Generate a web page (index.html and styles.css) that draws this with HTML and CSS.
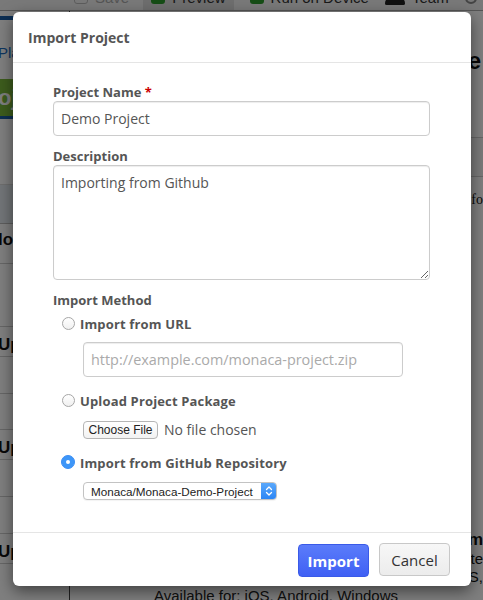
FILE: index.html
```html
<!DOCTYPE html>
<html>
<head>
<meta charset="utf-8">
<link rel="stylesheet" href="styles.css">
</head>
<body>
<div class="page">
  <div class="topbar">
    <span class="tb-item tb-save"><span class="tb-ico box"></span>Save</span>
    <span class="tb-item tb-active"><span class="tb-ico green"></span>Preview</span>
    <span class="tb-item"><span class="tb-ico green"></span>Run on Device</span>
    <span class="tb-item"><span class="tb-ico dark"></span>Team</span>
    <span class="tb-item"><span class="tb-ico gear"></span>Co</span>
  </div>
  <div class="page-main">
    <div class="side">
      <div class="side-tabline"></div>
      <div class="side-link">Pla</div>
      <div class="side-green">oj</div>
      <div class="side-grey"></div>
      <div class="side-row first">lo</div>
      <div class="side-row gap63"></div>
      <div class="side-row up">Up</div>
      <div class="side-row gap37"></div>
      <div class="side-row gap36"></div>
      <div class="side-row up">Up</div>
      <div class="side-row gap37"></div>
      <div class="side-row gap37"></div>
      <div class="side-row up">Up</div>
    </div>
    <div class="content">
      <div class="content-title">e</div>
      <div class="content-row"></div>
      <div class="content-text">fo</div>
      <div class="content-bottom">
        <div class="cb-title">m</div>
        <div class="cb-text">te</div>
        <div class="cb-text">S,</div>
        <div class="cb-avail">Available for: iOS, Android, Windows</div>
      </div>
    </div>
  </div>
</div>
<div class="overlay"></div>

<div class="modal">
  <div class="modal-header">Import Project</div>
  <div class="modal-body">
    <label class="field-label">Project Name <span class="req">*</span></label>
    <input class="text-input" type="text" value="Demo Project">
    <label class="field-label gap">Description</label>
    <textarea class="text-area">Importing from Github</textarea>
    <label class="field-label gap">Import Method</label>
    <div class="method">
      <label class="radio-row"><input type="radio" name="m"><span>Import from URL</span></label>
      <div class="sub">
        <input class="text-input url" type="text" placeholder="http://example.com/monaca-project.zip">
      </div>
      <label class="radio-row spaced"><input type="radio" name="m"><span>Upload Project Package</span></label>
      <div class="sub file-row">
        <button class="file-btn" type="button">Choose File</button>
        <span class="file-text">No file chosen</span>
      </div>
      <label class="radio-row spaced"><input type="radio" name="m" checked><span>Import from GitHub Repository</span></label>
      <div class="sub">
        <div class="select">
          <span class="select-text">Monaca/Monaca-Demo-Project</span>
          <span class="select-arrow">
            <svg width="8" height="12" viewBox="0 0 8 12"><path d="M1.5 4.5 L4 2 L6.5 4.5 M1.5 7.5 L4 10 L6.5 7.5" fill="none" stroke="#fff" stroke-width="1.3" stroke-linecap="round" stroke-linejoin="round"/></svg>
          </span>
        </div>
      </div>
    </div>
  </div>
  <div class="modal-footer">
    <button class="btn btn-primary" type="button">Import</button>
    <button class="btn btn-default" type="button">Cancel</button>
  </div>
</div>
</body>
</html>
```

FILE: styles.css
```css
* { box-sizing: border-box; }
html, body {
  margin: 0;
  padding: 0;
  width: 483px;
  height: 600px;
  overflow: hidden;
}
body {
  position: relative;
  font-family: "Open Sans", "DejaVu Sans", sans-serif;
  background: #fff;
}

/* background page */
.page {
  width: 483px;
  height: 600px;
  display: flex;
  flex-direction: column;
  background: #fff;
  overflow: hidden;
}
.topbar {
  margin-top: -15px;
  height: 26px;
  flex: none;
  display: flex;
  align-items: center;
  background: #f2f2f2;
  border-bottom: 1px solid #aaa;
  font-family: "Liberation Sans", sans-serif;
  font-size: 15px;
  color: #333;
  padding-left: 74px;
  gap: 16px;
  overflow: hidden;
}
.tb-item { display: flex; align-items: center; gap: 7px; height: 26px; white-space: nowrap; }
.tb-save { color: #aaa; }
.tb-active { background: #dcdcdc; padding: 0 8px; margin-left: -2px; }
.tb-ico { width: 14px; height: 13px; display: inline-block; border-radius: 3px; }
.tb-ico.box { border: 1px solid #bbb; }
.tb-ico.green { background: #2c9a2c; }
.tb-ico.dark { background: #222; border-radius: 8px 8px 2px 2px; height: 8px; margin-top: 6px; width: 20px; }
.tb-ico.gear { border: 2px solid #888; border-radius: 50%; width: 12px; height: 12px; }

.page-main { flex: 1; display: flex; min-height: 0; }
.side {
  width: 70px;
  flex: none;
  border-right: 1px solid #444;
  font-family: "Liberation Sans", sans-serif;
  font-size: 17px;
  color: #111;
  overflow: hidden;
}
.side-tabline { height: 4px; background: #1a5fa8; margin-top: 5px; }
.side-link { color: #1a6dc0; font-size: 15px; margin-top: 24px; height: 24px; text-indent: -2px; }
.side-green {
  background: #7ab83a; color: #fff; font-weight: bold; font-size: 22px;
  height: 40px; line-height: 38px; margin-top: 11px; border-bottom: 3px solid #1a5fa8;
  text-indent: -2px;
}
.side-grey { height: 40px; margin-top: 65px; background: #e5ebf0; border-bottom: 1px solid #bbb; border-top: 1px solid #ddd; }
.side-row { border-bottom: 1px solid #ccc; text-indent: -2px; font-weight: bold; }
.side-row.first { height: 40px; line-height: 32px; }
.side-row.gap63 { height: 63px; }
.side-row.gap37 { height: 37px; }
.side-row.gap36 { height: 36px; }
.side-row.up { height: 30px; line-height: 36px; }
.content {
  flex: 1;
  font-family: "Liberation Sans", sans-serif;
  color: #111;
  display: flex;
  flex-direction: column;
  overflow: hidden;
}
.content-title { font-size: 24px; font-weight: bold; text-align: right; margin-top: 36px; padding-right: 2px; height: 44px; }
.content-row { height: 40px; margin-top: 46px; border-bottom: 1px solid #ccc; border-top: 1px solid #ccc; background: #f5f5f5; }
.content-text { font-family: "Liberation Serif", serif; font-size: 14px; text-align: right; margin-top: 15px; }
.content-bottom { margin-top: auto; }
.cb-title { font-size: 17px; font-weight: bold; text-align: right; }
.cb-text { font-size: 15px; text-align: right; line-height: 18px; }
.cb-avail { font-size: 15px; padding-left: 84px; height: 14px; line-height: 20px; color: #222; white-space: nowrap; }

.overlay {
  position: absolute;
  inset: 0;
  background: rgba(0, 0, 0, 0.5);
}

/* modal */
.modal {
  position: absolute;
  left: 13px;
  top: 12px;
  width: 458px;
  height: 574px;
  background: #fff;
  border-radius: 6px;
  box-shadow: 0 5px 15px rgba(0, 0, 0, 0.5);
  display: flex;
  flex-direction: column;
  color: #555;
}
.modal-header {
  height: 51px;
  border-bottom: 1px solid #e5e5e5;
  padding: 1px 15px 0;
  display: flex;
  align-items: center;
  font-size: 14px;
  font-weight: bold;
  color: #555;
}
.modal-body {
  flex: 1;
  padding: 20px 41px 0 40px;
  display: flex;
  flex-direction: column;
}
.field-label {
  font-size: 13px;
  font-weight: bold;
  line-height: 18px;
  height: 18px;
  color: #555;
}
.field-label.gap { margin-top: 11px; }
.req { color: #c00; }
.text-input {
  height: 35px;
  width: 100%;
  border: 1px solid #ccc;
  border-radius: 4px;
  padding: 0 7px;
  font-family: "Open Sans", sans-serif;
  font-size: 14px;
  color: #555;
  box-shadow: inset 0 1px 1px rgba(0, 0, 0, 0.075);
  outline: none;
}
.text-input::placeholder { color: #aaa; }
.text-area {
  height: 115px;
  width: 100%;
  border: 1px solid #ccc;
  border-radius: 4px;
  padding: 7px 7px;
  font-family: "Open Sans", sans-serif;
  font-size: 14px;
  line-height: 20px;
  color: #555;
  box-shadow: inset 0 1px 1px rgba(0, 0, 0, 0.075);
  outline: none;
  resize: vertical;
}
.method {
  display: flex;
  flex-direction: column;
  padding-left: 9px;
  margin-top: 6px;
}
.radio-row {
  display: flex;
  align-items: center;
  gap: 5px;
  height: 18px;
  font-size: 13px;
  font-weight: bold;
  color: #555;
  letter-spacing: 0.15px;
}
.radio-row.spaced { margin-top: 15px; }
.radio-row input {
  appearance: none;
  -webkit-appearance: none;
  margin: 0;
  width: 13px;
  height: 13px;
  border-radius: 50%;
  border: 1px solid #a6a6a6;
  background: linear-gradient(#fff, #f0f0f0);
  position: relative;
  top: -1px;
}
.radio-row input:checked {
  width: 14px;
  height: 14px;
  margin-left: -1px;
  border-color: #3a8ef5;
  background: #3d96f8;
}
.radio-row input:checked::after {
  content: "";
  position: absolute;
  left: 4px;
  top: 4px;
  width: 4px;
  height: 4px;
  border-radius: 50%;
  background: #fff;
}
.sub { padding-left: 21px; margin-top: 9px; }
.text-input.url { width: 320px; font-size: 14.4px; }
.file-row { display: flex; align-items: center; gap: 6px; margin-top: 10px; }
.file-btn {
  height: 18px;
  width: 75px;
  padding: 0;
  border: 1px solid #b5b5b5;
  border-radius: 4px;
  background: linear-gradient(#fff, #f2f2f2);
  font-family: "Liberation Sans", sans-serif;
  font-size: 12px;
  color: #222;
}
.file-text { font-size: 14px; color: #555; }
.select {
  margin-top: 1px;
  width: 194px;
  height: 18px;
  border: 1px solid #c3c3c3;
  border-radius: 4px;
  display: flex;
  align-items: center;
  background: #fff;
  overflow: hidden;
  box-shadow: 0 1px 1px rgba(0, 0, 0, 0.05);
}
.select-text {
  flex: 1;
  font-family: "Liberation Sans", sans-serif;
  font-size: 11.7px;
  color: #222;
  padding-left: 7px;
  white-space: nowrap;
}
.select-arrow {
  width: 15px;
  height: 100%;
  background: linear-gradient(#5aa8fb, #2c86f5);
  display: flex;
  align-items: center;
  justify-content: center;
}
.modal-footer {
  height: 54px;
  border-top: 1px solid #e5e5e5;
  display: flex;
  justify-content: flex-end;
  align-items: flex-start;
  gap: 10px;
  padding: 10px 21px 0 0;
}
.btn {
  height: 33px;
  width: 71px;
  border-radius: 4px;
  font-family: "Open Sans", sans-serif;
  font-size: 15px;
  padding: 0;
}
.btn-primary {
  margin-top: 1px;
  background: linear-gradient(#5b7cfa, #3f60f4);
  border: 1px solid #3a5ae8;
  color: #fff;
  font-weight: bold;
}
.btn-default {
  background: linear-gradient(#f7f7f7, #ececec);
  border: 1px solid #c8c8c8;
  color: #333;
}
```
